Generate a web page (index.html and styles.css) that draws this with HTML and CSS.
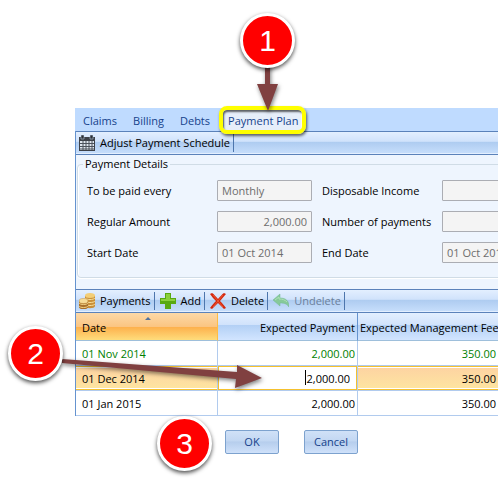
FILE: index.html
```html
<!DOCTYPE html>
<html lang="en">
<head>
	<meta charset="UTF-8">
	<title>Payment Plan</title>
	<link rel="stylesheet" href="styles.css">
</head>
<body>
	<div class="window">
		<nav class="tabs">
			<a href="#claims">Claims</a>
			<a href="#billing">Billing</a>
			<a href="#debts">Debts</a>
			<a href="#plan" class="active">Payment Plan</a>
		</nav>
		<div class="panel">
			<div class="toolbar">
				<button type="button" class="tool">
					<svg width="16" height="16" viewBox="0 0 16 16">
						<path d="M0 2h16v14H0z" fill="#3d4148"/>
						<path d="M1 6h14v9H1z" fill="#dfe6ee"/>
						<path d="M4 6v9M7 6v9M10 6v9M13 6v9M1 8.500h14M1 11.500h14M1 14h14" stroke="#4c525b"/>
						<path d="M2 0h3v4H2zM11 0h3v4h-3z" fill="#2c3036" stroke="#c9dcf5" stroke-width=".5"/>
					</svg>
					Adjust Payment Schedule
				</button>
			</div>
			<fieldset class="details">
				<legend>Payment Details</legend>
				<div class="fields">
					<label for="every">To be paid every</label>
					<input id="every" type="text" value="Monthly" disabled>
					<label for="income">Disposable Income</label>
					<input id="income" type="text" disabled>
					<label for="amount">Regular Amount</label>
					<input id="amount" class="num" type="text" value="2,000.00" disabled>
					<label for="number">Number of payments</label>
					<input id="number" type="text" disabled>
					<label for="start">Start Date</label>
					<input id="start" type="text" value="01 Oct 2014" disabled>
					<label for="end">End Date</label>
					<input id="end" type="text" value="01 Oct 2014" disabled>
				</div>
			</fieldset>
			<div class="toolbar">
				<button type="button" class="tool">
					<svg width="16" height="16" viewBox="0 0 16 16">
						<path d="M6 3v10c0 3 10 3 10 0V3z" fill="#c98f3a"/>
						<path d="M6 5c1 2 9 2 10 0M6 8c1 2 9 2 10 0M6 11c1 2 9 2 10 0" fill="none" stroke="#f7df9c"/>
						<ellipse cx="11" cy="2.500" rx="5" ry="2.500" fill="#f3ce78"/>
						<path d="M0 8v6c0 3 9 3 9 0V8z" fill="#a9712c"/>
						<path d="M0 10c1 2 8 2 9 0M0 13c1 2 8 2 9 0" fill="none" stroke="#f1d083"/>
						<ellipse cx="4.500" cy="8" rx="4.500" ry="2.500" fill="#f6dc98" stroke="#c28c3c" stroke-width=".5"/>
					</svg>
					Payments
				</button>
				<button type="button" class="tool">
					<svg width="16" height="16" viewBox="0 0 16 16">
						<path d="M5 0h6v5h5v6h-5v5H5v-5H0V5h5z" fill="#58a911"/>
						<path d="M6 1h4v5h5v2H1V6h5z" fill="#8ad03c"/>
					</svg>
					Add
				</button>
				<button type="button" class="tool">
					<svg width="16" height="16" viewBox="0 0 16 16">
						<path d="M2 0c2 1 4 4 6 6 2-2 4-5 6-6l2 1c-2 2-4 5-6 7 2 2 4 4 6 7l-2 1c-2-2-4-4-6-6-2 2-4 4-6 6l-2-1c2-3 4-5 6-7-2-2-4-4-6-7z" fill="#d3280e"/>
						<path d="M3 2l10 12M13 2L3 14" stroke="#ee5632" fill="none"/>
					</svg>
					Delete
				</button>
				<button type="button" class="tool" disabled>
					<svg width="16" height="16" viewBox="0 0 16 16">
						<path d="M0 7l7-6v4c6 0 9 3 9 9-2-3-4-4-9-4v3z" fill="#86c99a" stroke="#72b990" stroke-width=".5"/>
						<path d="M2 7l4-3v2c4 0 6 1 8 3" fill="none" stroke="#aee0b6"/>
					</svg>
					Undelete
				</button>
			</div>
			<table class="payments">
				<thead>
					<tr>
						<th class="sorted">Date</th>
						<th>Expected Payment</th>
						<th>Expected Management Fee</th>
					</tr>
				</thead>
				<tbody>
					<tr class="paid">
						<td>01 Nov 2014</td>
						<td>2,000.00</td>
						<td>350.00</td>
					</tr>
					<tr class="selected">
						<td>01 Dec 2014</td>
						<td class="editing"><input type="text" value="2,000.00" aria-label="Expected Payment"><span class="caret"></span></td>
						<td>350.00</td>
					</tr>
					<tr>
						<td>01 Jan 2015</td>
						<td>2,000.00</td>
						<td>350.00</td>
					</tr>
				</tbody>
			</table>
		</div>
	</div>
	<div class="buttons">
		<button type="button">OK</button>
		<button type="button">Cancel</button>
	</div>

	<!-- numbered steps over the form -->
	<svg class="arrows" width="498" height="483" viewBox="0 0 498 483">
		<path d="M265 64h5v20h8l-10 27-11-27h8z"/>
		<path d="M62 359l175 13v-7l25 13-27 10 1-9L62 363z"/>
	</svg>
	<span class="step step1">1</span>
	<span class="step step2">2</span>
	<span class="step step3">3</span>
</body>
</html>
```
FILE: styles.css
```css
*{
	box-sizing:border-box;
}
body{
	margin:0;
	padding-top:108px;
	position:relative;
	overflow:hidden;
	background:#fff;
	color:#000;
	font:11px/16px "Open Sans","Noto Sans",sans-serif;
}
input,button{
	font:inherit;
	margin:0;
}
.window{
	margin-left:75px;
	overflow-x:clip;
}
.tabs{
	height:23px;
	display:flex;
	background:#bfdbff;
}
.tabs a{
	padding:5px 8px 0;
	color:#15428b;
	text-decoration:none;
}
.tabs .active{
	position:relative;
	margin:2px 0 0 6px;
	padding:3px 3px 0 4px;
	background:#e6eefa;
	border-right:1px solid #fff;
}
.tabs .active::after{
	content:"";
	position:absolute;
	top:-4px;
	right:-5px;
	bottom:-3px;
	left:-5px;
	border:4px solid #ff0;
	border-radius:8px;
	box-shadow:1px 2px 3px rgba(0,0,0,.6),inset 1px 2px 2px rgba(0,0,0,.6);
}
.panel{
	border-left:1px solid #6593cf;
	background:#eef5fe;
}
.toolbar{
	height:24px;
	display:flex;
	border-top:1px solid #5b82ba;
	border-bottom:1px solid #5b82ba;
	background:linear-gradient(#e3efff,#d0e2fb 43%,#adcbf0 44%,#c8dffc);
	box-shadow:inset 0 -1px #e3efff;
}
.tool{
	display:flex;
	align-items:center;
	gap:5px;
	margin:2px 0;
	padding:0 3px;
	border:0;
	border-right:1px solid #4d76ad;
	background:none;
	color:#000;
	white-space:nowrap;
}
.tool + .tool{
	padding-left:5px;
}
.tool:disabled{
	color:#6b7f9b;
}
.details{
	width:520px;
	margin:1px 0 11px 1px;
	padding:8px 9px 14px;
	border:1px solid #d0dce6;
	border-radius:4px;
	box-shadow:inset 1px 0 #fff,0 1px #fff;
}
.details legend{
	padding:0 2px;
	margin-left:-4px;
}
.fields{
	display:grid;
	grid-template-columns:120px 95px 110px 95px;
	grid-auto-rows:21px;
	gap:10px;
	align-items:center;
}
.fields input{
	width:100%;
	height:21px;
	padding:0 4px;
	border:1px solid #abadb3;
	border-radius:1px;
	background:#f4f4f4;
	color:#6d6d6d;
}
.fields .num{
	text-align:right;
}
.payments{
	width:100%;
	table-layout:fixed;
	border-collapse:separate;
	border-spacing:0;
	background:#fff;
}
.payments th{
	height:28px;
	padding:2px 2px 0;
	border-right:1px solid #6593cf;
	border-bottom:1px solid #9ebfdb;
	background:linear-gradient(#e3efff,#d0e2fb 45%,#b3d0f5 46%,#d2e5ff);
	font-weight:normal;
	text-align:right;
	white-space:nowrap;
}
.payments th:first-child,.payments td:first-child{
	width:142px;
	padding-left:6px;
	text-align:left;
}
.payments th:nth-child(2){
	width:140px;
}
.payments .sorted{
	position:relative;
	background:linear-gradient(#fcd9a8,#fbc582 50%,#fdaf4b 51%,#fedd7c);
	border-right:1px solid #ffbd45;
}
.sorted::after{
	content:"";
	position:absolute;
	top:4px;
	left:50%;
	margin-left:-2px;
	border:solid transparent;
	border-width:0 3px 3px;
	border-bottom-color:#54729b;
}
.payments td{
	height:25px;
	padding:1px 2px 0;
	border-right:1px solid #b1cbee;
	border-bottom:1px solid #b1cbee;
	text-align:right;
}
.payments th:last-child,.payments td:last-child{
	border-right:0;
}
.paid td{
	color:#008000;
}
.payments .selected td{
	background:linear-gradient(#fdd2a2,#fee6a0);
	box-shadow:inset 0 1px #f5c12e,inset 0 -1px #f5c12e,inset 0 2px #fff,inset 0 -2px #fff;
}
.payments .selected .editing{
	position:relative;
	padding:0;
	background:#fff;
	box-shadow:inset 0 0 0 1px #f5c12e;
}
.editing input{
	display:block;
	width:100%;
	height:22px;
	padding:0 7px;
	border:0;
	background:none;
	text-align:right;
}
.caret{
	position:absolute;
	top:4px;
	right:51px;
	width:1px;
	height:15px;
	background:#000;
}
.buttons{
	display:flex;
	gap:25px;
	margin:14px 0 29px 225px;
}
.buttons button{
	width:54px;
	height:24px;
	padding:0;
	border:1px solid #7da2ce;
	border-radius:2px;
	background:linear-gradient(#d0e1f7,#c2d7f2 45%,#b6ceed 50%,#cfe1fa);
	color:#15428b;
}
.arrows{
	position:absolute;
	top:0;
	left:0;
	fill:#804040;
	filter:drop-shadow(1px 2px 2px rgba(0,0,0,.5));
}
.step{
	position:absolute;
	width:55px;
	height:55px;
	border:3px solid #fff;
	border-radius:50%;
	background:#f00;
	box-shadow:0 2px 4px rgba(0,0,0,.7);
	color:#fff;
	font:30px/49px "Liberation Sans",Arial,sans-serif;
	text-align:center;
}
.step1{
	top:13px;
	left:240px;
}
.step2{
	top:326px;
	left:8px;
}
.step3{
	top:416px;
	left:157px;
}
```
